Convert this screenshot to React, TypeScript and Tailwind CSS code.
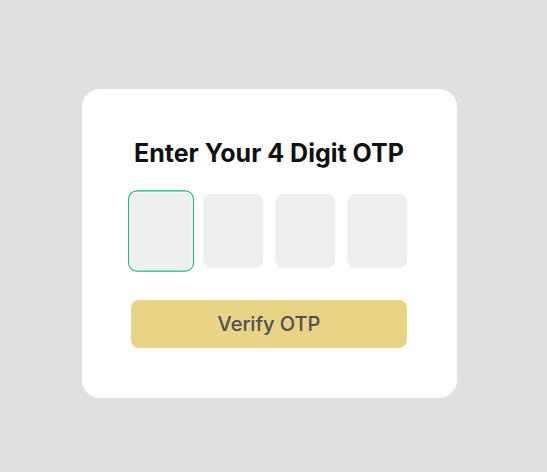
export default function App() {
  const digits = [0, 1, 2, 3];

  return (
    <main
      className="min-h-screen w-full bg-[#e0e0e0] pl-[82px] pt-[89px]"
      style={{ fontFamily: "Inter, 'Noto Sans', sans-serif" }}
    >
      <div className="w-[375px] rounded-[18px] bg-white pl-[49px] pr-[50px] pt-12 pb-[50px]">
        <h1 className="text-center text-[25px] leading-8 font-bold text-[#111111]">
          Enter Your 4 Digit OTP
        </h1>

        <div className="mt-[25px] flex gap-3">
          {digits.map((i) => (
            <div
              key={i}
              className={
                i === 0
                  ? "h-[74px] w-[60px] scale-110 rounded-lg border border-[#19b98a] bg-[#efefef] shadow-[inset_0_0_0_1px_#ffffff]"
                  : "h-[74px] w-[60px] rounded-lg bg-[#efefef]"
              }
            />
          ))}
        </div>

        <button className="mt-8 block h-12 w-[276px] rounded-lg bg-[#e9d384] text-xl font-medium text-[#4b5058]">
          Verify OTP
        </button>
      </div>
    </main>
  );
}
